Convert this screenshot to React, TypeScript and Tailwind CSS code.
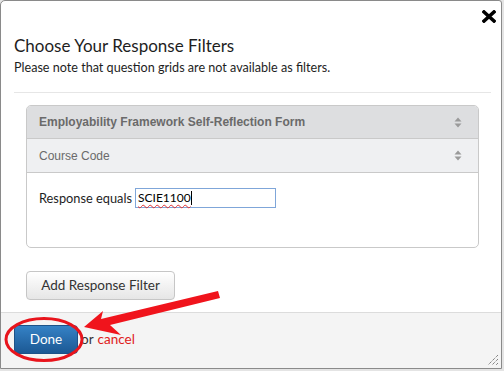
import React from "react";

function SortIcon() {
  return (
    <svg width="8" height="11" viewBox="0 0 8 11" className="block">
      <path d="M4 0.5 L7.5 4.5 L0.5 4.5 Z" fill="#9a9a9a" />
      <path d="M4 10.5 L7.5 6.5 L0.5 6.5 Z" fill="#9a9a9a" />
    </svg>
  );
}

export default function App() {
  return (
    <div className="relative w-[504px] h-[371px] overflow-hidden bg-[#e4e4e4] font-['Lato',sans-serif]">
      <div className="w-[502px] h-[369px] border border-[#8a8a8a] rounded-tl-[5px] rounded-tr-[3px] bg-white flex flex-col">
        <div className="flex justify-end pt-[9px] pr-[5px]">
          <svg width="14" height="13" viewBox="0 0 14 13" className="block">
            <path d="M2 2 L12 11 M12 2 L2 11" stroke="#000" strokeWidth="3.6" strokeLinecap="square" />
          </svg>
        </div>
        <div className="pl-[13px] mt-[13px] text-[17px] leading-[20px] text-[#1e1e1e]">
          Choose Your Response Filters
        </div>
        <div className="pl-[13px] mt-[4px] text-[12.6px] leading-[16px] text-[#1e1e1e]">
          Please note that question grids are not available as filters.
        </div>
        <div className="ml-[13px] mr-[10px] mt-[16px] h-px bg-[#e6e6e6]" />
        <div className="ml-[25px] w-[453px] mt-[12px] border border-[#c9c9c9] rounded-[5px] overflow-hidden">
          <div className="h-[33px] bg-[#dddee0] border-b border-[#c9c9c9] flex items-center justify-between pl-[12px] pr-[16px]">
            <span className="font-['Liberation_Sans',Arial,sans-serif] font-bold text-[12px] text-[#6a6a6a]">
              Employability Framework Self-Reflection Form
            </span>
            <SortIcon />
          </div>
          <div className="h-[34px] bg-[#eff0f2] border-b border-[#c9c9c9] flex items-center justify-between pl-[12px] pr-[16px]">
            <span className="font-['Liberation_Sans',Arial,sans-serif] text-[12px] text-[#6a6a6a]">
              Course Code
            </span>
            <SortIcon />
          </div>
          <div className="h-[74px] pl-[12px] pt-[15px] flex items-start">
            <span className="text-[12.8px] leading-[20px] text-[#1e1e1e] mr-[3px]">Response equals</span>
            <div className="w-[141px] h-[20px] border border-[#7fa6d9] flex items-center pl-[2px] text-[12px] text-black">
              <span className="underline decoration-wavy decoration-[#e03030] decoration-[1px] underline-offset-[2px]">SCIE1100</span>
              <span className="w-px h-[14px] bg-black" />
            </div>
          </div>
        </div>
        <div className="ml-[25px] mt-[23px]">
          <div className="w-[149px] h-[29px] rounded-[4px] border border-[#c6c6c6] bg-gradient-to-b from-white to-[#e6e6e6] flex items-center justify-center text-[13.5px] text-[#333]">
            Add Response Filter
          </div>
        </div>
        <div className="mt-[12px] flex-1 bg-[#f4f4f4] border-t border-[#dcdcdc] pl-[13px] pt-[12px] relative">
          <div className="flex items-center">
            <div className="w-[64px] h-[29px] rounded-[4px] border border-[#1d5288] bg-gradient-to-b from-[#3582c6] to-[#1c5994] flex items-center justify-center text-[13.5px] text-white">
              Done
            </div>
            <span className="ml-[3px] text-[13.5px] text-[#333]">or</span>
            <span className="ml-[4px] text-[13.5px] text-[#e0201a]">cancel</span>
          </div>
          <svg width="12" height="12" viewBox="0 0 12 12" className="absolute right-[2px] bottom-[2px]">
            <path d="M11 1 L1 11 M11 5 L5 11 M11 9 L9 11" stroke="#555" strokeWidth="1" strokeDasharray="1 1" />
          </svg>
        </div>
      </div>
      <svg width="504" height="371" viewBox="0 0 504 371" className="absolute left-0 top-0 pointer-events-none">
        <ellipse cx="44" cy="339.5" rx="38" ry="21" fill="none" stroke="#e8141c" strokeWidth="3" />
        <path
          d="M84 327 L103 311 L101 319 L218 291 L220 298 L110 325 L121 335 Z"
          fill="#f0141c"
        />
      </svg>
    </div>
  );
}
